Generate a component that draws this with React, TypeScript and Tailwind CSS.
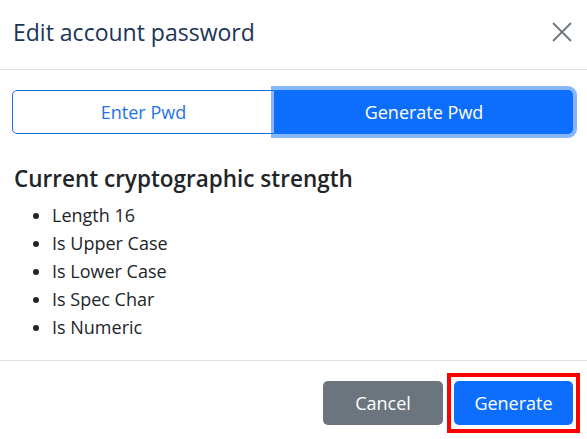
export default function App() {
  const checks = ["Length 16", "Is Upper Case", "Is Lower Case", "Is Spec Char", "Is Numeric"];

  return (
    <div className="w-[587px] h-[439px] bg-white text-[#212529] font-['Open_Sans',sans-serif] overflow-hidden">
      {/* header */}
      <div className="flex items-start justify-between pl-[13px] pr-[15px] pt-[17px] pb-[22px] border-b border-[#dee2e6]">
        <h5 className="text-[23px] leading-[30px] font-medium text-[#1b3556]">Edit account password</h5>
        <button className="mt-[5px] text-[#6c757d]">
          <svg width="20" height="20" viewBox="0 0 20 20" fill="none" stroke="currentColor" strokeWidth="1.8">
            <path d="M1 1L19 19M19 1L1 19" />
          </svg>
        </button>
      </div>

      {/* body */}
      <div className="pl-[12px] pr-[14px] pt-[20px]">
        <div className="flex h-[44px]">
          <button className="w-[263px] border border-[#1a6fe0] rounded-l-[5px] text-[18px] text-[#1f72e8]">
            Enter Pwd
          </button>
          <button className="relative z-10 flex-1 bg-[#0d6efd] rounded-r-[5px] text-[18px] text-white shadow-[0_0_0_4px_rgba(13,110,253,0.5)]">
            Generate Pwd
          </button>
        </div>

        <h4 className="mt-[30px] ml-[2px] text-[22.5px] leading-[30px] font-semibold">Current cryptographic strength</h4>
        <ul className="mt-[7px] ml-[2px] pl-[38px] list-disc text-[18px] leading-[28px]">
          {checks.map((c) => (
            <li key={c}>{c}</li>
          ))}
        </ul>
      </div>

      {/* footer */}
      <div className="mt-[19px] border-t border-[#dee2e6] flex justify-end gap-[11px] pt-[20px] pr-[14px]">
        <button className="w-[120px] h-[44px] rounded-[5px] bg-[#6c757d] text-white text-[18px]">Cancel</button>
        <div className="relative">
          <button className="w-[119px] h-[44px] rounded-[5px] bg-[#0d6efd] text-white text-[18px]">Generate</button>
          {/* highlight box */}
          <span className="absolute -inset-x-[7px] -inset-y-[8px] border-4 border-[#ff0000] pointer-events-none" />
        </div>
      </div>
    </div>
  );
}
